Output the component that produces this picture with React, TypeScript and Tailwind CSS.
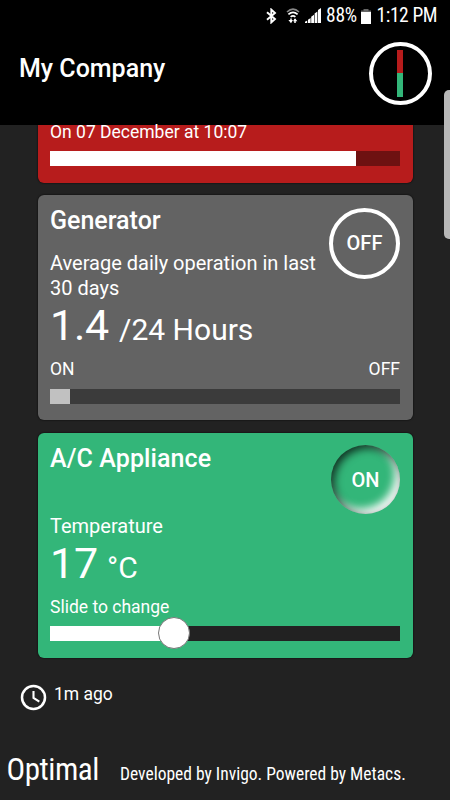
import type { ReactNode } from "react"

function StatusBar() {
  return (
    <div className="flex h-8 items-center pl-[265.5px] text-white">

      {/* Bluetooth */}
      <svg width="11" height="16" viewBox="0 0 11 16" fill="none" stroke="white" strokeWidth="1.9">
        <path d="M1 4.2 L9 11 L5.3 14.4 V1.6 L9 5 L1 11.8" />
      </svg>

      {/* Wifi */}
      <svg className="ml-[9.5px]" width="14" height="16" viewBox="0 0 14 16" fill="none" stroke="white" strokeWidth="1.7">
        <path d="M1 4 Q7 -1.8 13 4" stroke="#888" />
        <path d="M2.4 6.4 Q7 2.4 11.6 6.4" />
        <path d="M4.6 8.8 Q7 6.8 9.4 8.8" />
        <path d="M5 10.5 V14 M9 11 V15" strokeWidth="1.5" />
        <path d="M2.4 12 H7 L5 15.2 Z M7 13.2 L9 10.2 L11.4 13.2 Z" fill="white" stroke="none" />
      </svg>

      {/* Signal */}
      <svg className="ml-[5px]" width="16" height="16" viewBox="0 0 16 16" fill="white">
        <path d="M0 15 V13.8 L2.2 12.5 V15 Z M3 15 V11.7 L5.6 10 V15 Z M6.2 15 V8.7 L9 6.7 V15 Z M9.6 15 V5.5 L12.4 3.5 V15 Z M13 15 V2 L16 0 V15 Z" />
      </svg>

      <span className="ml-[5px] w-[30px] text-[19.5px] leading-8 tracking-[-0.2px] whitespace-nowrap [font-stretch:75%]">88%</span>

      {/* Battery */}
      <svg className="ml-[4.5px]" width="10" height="15" viewBox="0 0 10 15">
        <path d="M2.5 0 H7.5 V1.5 H10 V5 H0 V1.5 H2.5 Z" fill="#666" />
        <path d="M0 3 H10 V15 H0 Z" fill="white" />
      </svg>

      <span className="ml-[6px] text-[19.5px] leading-8 tracking-[-0.4px] whitespace-nowrap [font-stretch:75%]">1:12 PM</span>

    </div>
  )
}

function Header() {
  return (
    <header className="h-[125px] bg-black">

      <StatusBar />

      <div className="flex justify-between pr-[18.5px] pl-[19px]">

        <h1 className="mt-[21.5px] text-[25px] leading-[30px] font-medium">My Company</h1>

        <div className="mt-[10px] flex size-[63px] flex-col items-center justify-center rounded-full border-4 border-white">
          <div className="h-[23px] w-[6px] bg-[#b71c1c]"></div>
          <div className="h-[24px] w-[6px] bg-[#33b679]"></div>
        </div>

      </div>

    </header>
  )
}

function Card({ className, children }: { className: string; children: ReactNode }) {
  return (
    <section className={`px-[12.5px] shadow-[0_0_2px_#000] ${className}`}>
      {children}
    </section>
  )
}

export default function App() {
  return (
    <div className="relative flex h-[800px] w-[450px] flex-col overflow-hidden bg-[#222222] font-[Roboto,sans-serif] text-white">

      <Header />

      <main className="h-[545px] px-[37.5px]">

        {/* Alarm */}
        <Card className="h-[57.5px] rounded-b-[6px] bg-[#b71c1c]">

          <p className="h-[26px] text-[17.5px] leading-[14px]">On 07 December at 10:07</p>

          <div className="h-[15px] bg-[#6e1111]">
            <div className="h-full w-[306px] bg-white"></div>
          </div>

        </Card>

        {/* Generator */}
        <Card className="relative mt-[12.5px] h-[225px] rounded-[6px] bg-[#636363] pt-3">

          <h2 className="text-[25px] leading-7 font-medium">Generator</h2>

          <button className="absolute top-[12.5px] right-[12.5px] size-[71px] rounded-full border-4 border-white text-[20px] font-medium">
            OFF
          </button>

          <p className="mt-4 w-[275px] text-[20px] leading-[25px]">
            Average daily operation in last 30 days
          </p>

          <p className="flex h-[49px] items-baseline text-[43px] leading-[48px] tracking-[-0.2px]">
            1.4 <span className="ml-[10px] text-[30px] tracking-normal">/24 Hours</span>
          </p>

          <div className="mt-[9px] flex justify-between text-[17.5px] leading-5">
            <span>ON</span>
            <span>OFF</span>
          </div>

          <div className="mt-[10px] h-[15px] bg-[#3b3b3b]">
            <div className="h-full w-[20px] bg-[#c1c1c1]"></div>
          </div>

        </Card>

        {/* A/C */}
        <Card className="relative mt-[12.5px] h-[225px] rounded-[6px] bg-[#33b679] pt-3">

          <h2 className="text-[25px] leading-7 font-medium tracking-[0.1px]">A/C Appliance</h2>

          <button className="absolute top-[12.5px] right-[12.5px] size-[69px] rounded-full text-[20px] font-medium shadow-[inset_3px_3px_9px_rgba(0,0,0,0.75),inset_-5px_-5px_9px_rgba(255,255,255,1)]">
            ON
          </button>

          <p className="mt-[41px] text-[20px] leading-[25px]">Temperature</p>

          <p className="flex h-[50px] items-baseline text-[43px] leading-[48px] tracking-[-0.2px]">
            17 <span className="ml-[9px] text-[30px] tracking-normal">°C</span>
          </p>

          <p className="mt-2 text-[17.5px] leading-5">Slide to change</p>

          <div className="relative mt-[9px] h-[15px] bg-[#222222]">
            <div className="h-full w-[124px] bg-white"></div>
            <div className="absolute top-[-8.5px] left-[108px] size-8 rounded-full border border-[#777] bg-white"></div>
          </div>

        </Card>

      </main>

      <div className="flex h-[66px] pt-[14px] pl-[20px]">
        <svg width="27" height="27" viewBox="0 0 27 27" fill="none" stroke="white" strokeWidth="2.5">
          <circle cx="13.5" cy="13.5" r="11.5" />
          <path d="M13.5 7 V14 L19.3 17.6" strokeWidth="2.1" />
        </svg>
        <span className="ml-[7px] text-[17.5px] leading-5">1m ago</span>
      </div>

      <footer className="flex items-baseline pt-[14px] pl-[6.5px] leading-[40px] whitespace-nowrap [font-stretch:75%]">
        <span className="w-[113.5px] text-[31px] tracking-[-0.45px]">Optimal</span>
        <span className="text-[17.5px]">Developed by Invigo. Powered by Metacs.</span>
      </footer>

      {/* Edge panel handle */}
      <div className="absolute top-[90px] right-0 h-[149px] w-[6px] rounded-l-[5px] bg-[#b8b8b8]"></div>

    </div>
  )
}
